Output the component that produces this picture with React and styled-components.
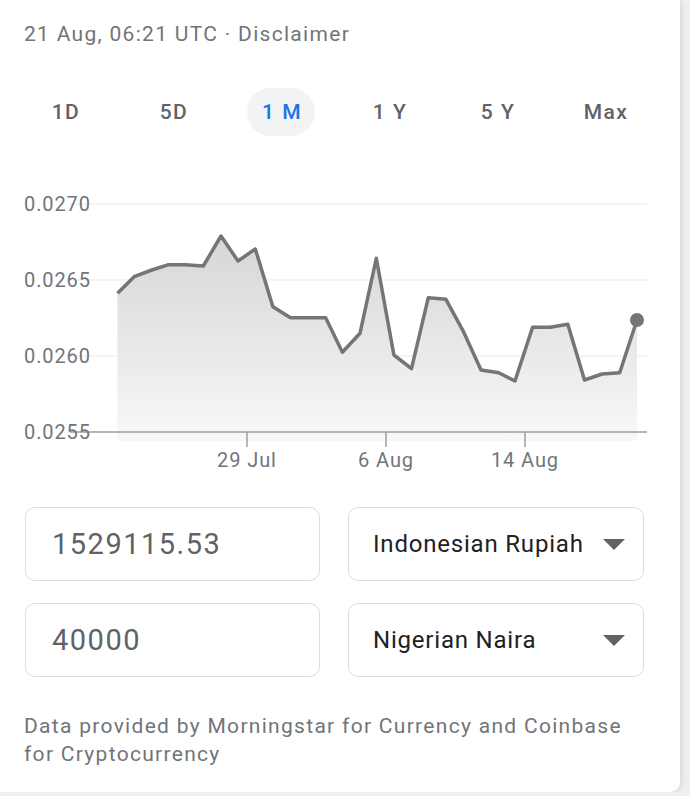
import styled, { createGlobalStyle } from 'styled-components';

const GlobalStyle = createGlobalStyle`
  html, body {
    margin: 0;
    padding: 0;
    background: #efefef;
    font-family: Roboto, "Noto Sans", Arial, sans-serif;
  }
`;

const Card = styled.div`
  width: 680px;
  height: 792px;
  box-sizing: border-box;
  background: #fff;
  border-radius: 0 0 10px 0;
  box-shadow: 1px 0 6px rgba(0, 0, 0, 0.12);
  padding: 20px 24px 0 24px;
`;

const Meta = styled.div`
  font-size: 21px;
  line-height: 28px;
  letter-spacing: 1.3px;
  color: #70757a;
`;

const Tabs = styled.div`
  display: flex;
  margin: 40px -3px 0 -13px;
`;

const Tab = styled.div`
  flex: 1;
  display: flex;
  justify-content: center;
`;

const TabPill = styled.div`
  height: 48px;
  padding: 0 13px 0 15px;
  border-radius: 24px;
  display: flex;
  align-items: center;
  font-size: 21px;
  font-weight: 500;
  letter-spacing: 1.5px;
  color: ${p => (p.$active ? '#1a73e8' : '#5f6368')};
  background: ${p => (p.$active ? '#f1f3f4' : 'transparent')};
`;

const ChartBox = styled.div`
  margin: 0 -24px;
  height: 354px;
`;

const Converter = styled.div`
  display: grid;
  grid-template-columns: 295px 296px;
  grid-auto-rows: 74px;
  column-gap: 28px;
  row-gap: 22px;
  margin: 17px 0 0 1px;
`;

const Field = styled.div`
  box-sizing: border-box;
  border: 1.5px solid #dadce0;
  border-radius: 10px;
  display: flex;
  align-items: center;
  justify-content: space-between;
  padding: 0 18px 0 ${p => (p.$select ? '24px' : '26px')};
`;

const Amount = styled.span`
  font-size: 29px;
  letter-spacing: 1.5px;
  color: #5f6368;
`;

const Currency = styled.span`
  font-size: 24px;
  letter-spacing: 0.8px;
  color: #202124;
`;

const Arrow = styled.span`
  width: 0;
  height: 0;
  border-left: 11px solid transparent;
  border-right: 11px solid transparent;
  border-top: 11px solid #5f6368;
`;

const Footer = styled.p`
  margin: 35px 0 0 0;
  width: 630px;
  font-size: 21px;
  line-height: 28px;
  letter-spacing: 1.3px;
  color: #70757a;
`;

const points = [
  [117.5, 293.3], [134.2, 276.7], [151.8, 270], [168.6, 264.7], [184.9, 264.7],
  [203.3, 266], [221, 236], [238, 261], [255.3, 249], [272.9, 306.7],
  [290.5, 317.7], [308, 317.7], [325.7, 317.7], [342.4, 352.3], [360, 333.3],
  [376.3, 258.3], [393.9, 355], [411.5, 368.7], [428.3, 297.7], [445.9, 299.3],
  [463.5, 331.7], [481, 370], [498.7, 372.7], [515, 381], [532.6, 327.3],
  [550.2, 327.3], [567.8, 324.3], [584.5, 380], [602.1, 374], [619.7, 372.7],
  [637, 320],
];

// chart coordinates are page coordinates shifted up by the chart's top
const OFF = 136;

const Chart = () => {
  const pts = points.map(([x, y]) => [x, y - OFF]);
  const line = pts.map(([x, y], i) => `${i ? 'L' : 'M'}${x} ${y}`).join(' ');
  const area = `${line} L637 ${441 - OFF} L117.5 ${441 - OFF} Z`;
  const yLabels = [
    ['0.0270', 204],
    ['0.0265', 280],
    ['0.0260', 356],
  ];
  const xTicks = [
    ['29 Jul', 247],
    ['6 Aug', 386],
    ['14 Aug', 525],
  ];
  const last = pts[pts.length - 1];
  return (
    <svg width="680" height="354" viewBox="0 0 680 354">
      <defs>
        <linearGradient id="fill" x1="0" y1="0" x2="0" y2="1">
          <stop offset="0" stopColor="#d6d6d6" />
          <stop offset="1" stopColor="#f8f8f8" />
        </linearGradient>
      </defs>
      {yLabels.map(([t, y]) => (
        <line key={t} x1="70" x2="647" y1={y - OFF} y2={y - OFF} stroke="#f1f1f1" strokeWidth="1.5" />
      ))}
      <path d={area} fill="url(#fill)" />
      <path d={line} fill="none" stroke="#757575" strokeWidth="3.5" strokeLinejoin="round" />
      <circle cx={last[0]} cy={last[1]} r="7" fill="#757575" />
      <line x1="70" x2="647" y1={432 - OFF} y2={432 - OFF} stroke="#9e9e9e" strokeWidth="1.5" />
      {xTicks.map(([t, x]) => (
        <g key={t}>
          <line x1={x} x2={x} y1={432 - OFF} y2={447 - OFF} stroke="#9e9e9e" strokeWidth="1.5" />
          <text x={x} y={467 - OFF} textAnchor="middle" fontSize="20" letterSpacing="0.9" fill="#70757a" fontFamily="Roboto, sans-serif">{t}</text>
        </g>
      ))}
      {[...yLabels, ['0.0255', 432]].map(([t, y]) => (
        <text key={t} x="24" y={y - OFF + 7} fontSize="20" letterSpacing="0.9" fill="#70757a" fontFamily="Roboto, sans-serif">{t}</text>
      ))}
    </svg>
  );
};

const tabs = ['1D', '5D', '1 M', '1 Y', '5 Y', 'Max'];

export default function App() {
  return (
    <>
      <GlobalStyle />
      <Card>
        <Meta>21 Aug, 06:21 UTC · Disclaimer</Meta>
        <Tabs>
          {tabs.map(t => (
            <Tab key={t}>
              <TabPill $active={t === '1 M'}>{t}</TabPill>
            </Tab>
          ))}
        </Tabs>
        <ChartBox>
          <Chart />
        </ChartBox>
        <Converter>
          <Field><Amount>1529115.53</Amount></Field>
          <Field $select><Currency>Indonesian Rupiah</Currency><Arrow /></Field>
          <Field><Amount>40000</Amount></Field>
          <Field $select><Currency>Nigerian Naira</Currency><Arrow /></Field>
        </Converter>
        <Footer>Data provided by Morningstar for Currency and Coinbase for Cryptocurrency</Footer>
      </Card>
    </>
  );
}
